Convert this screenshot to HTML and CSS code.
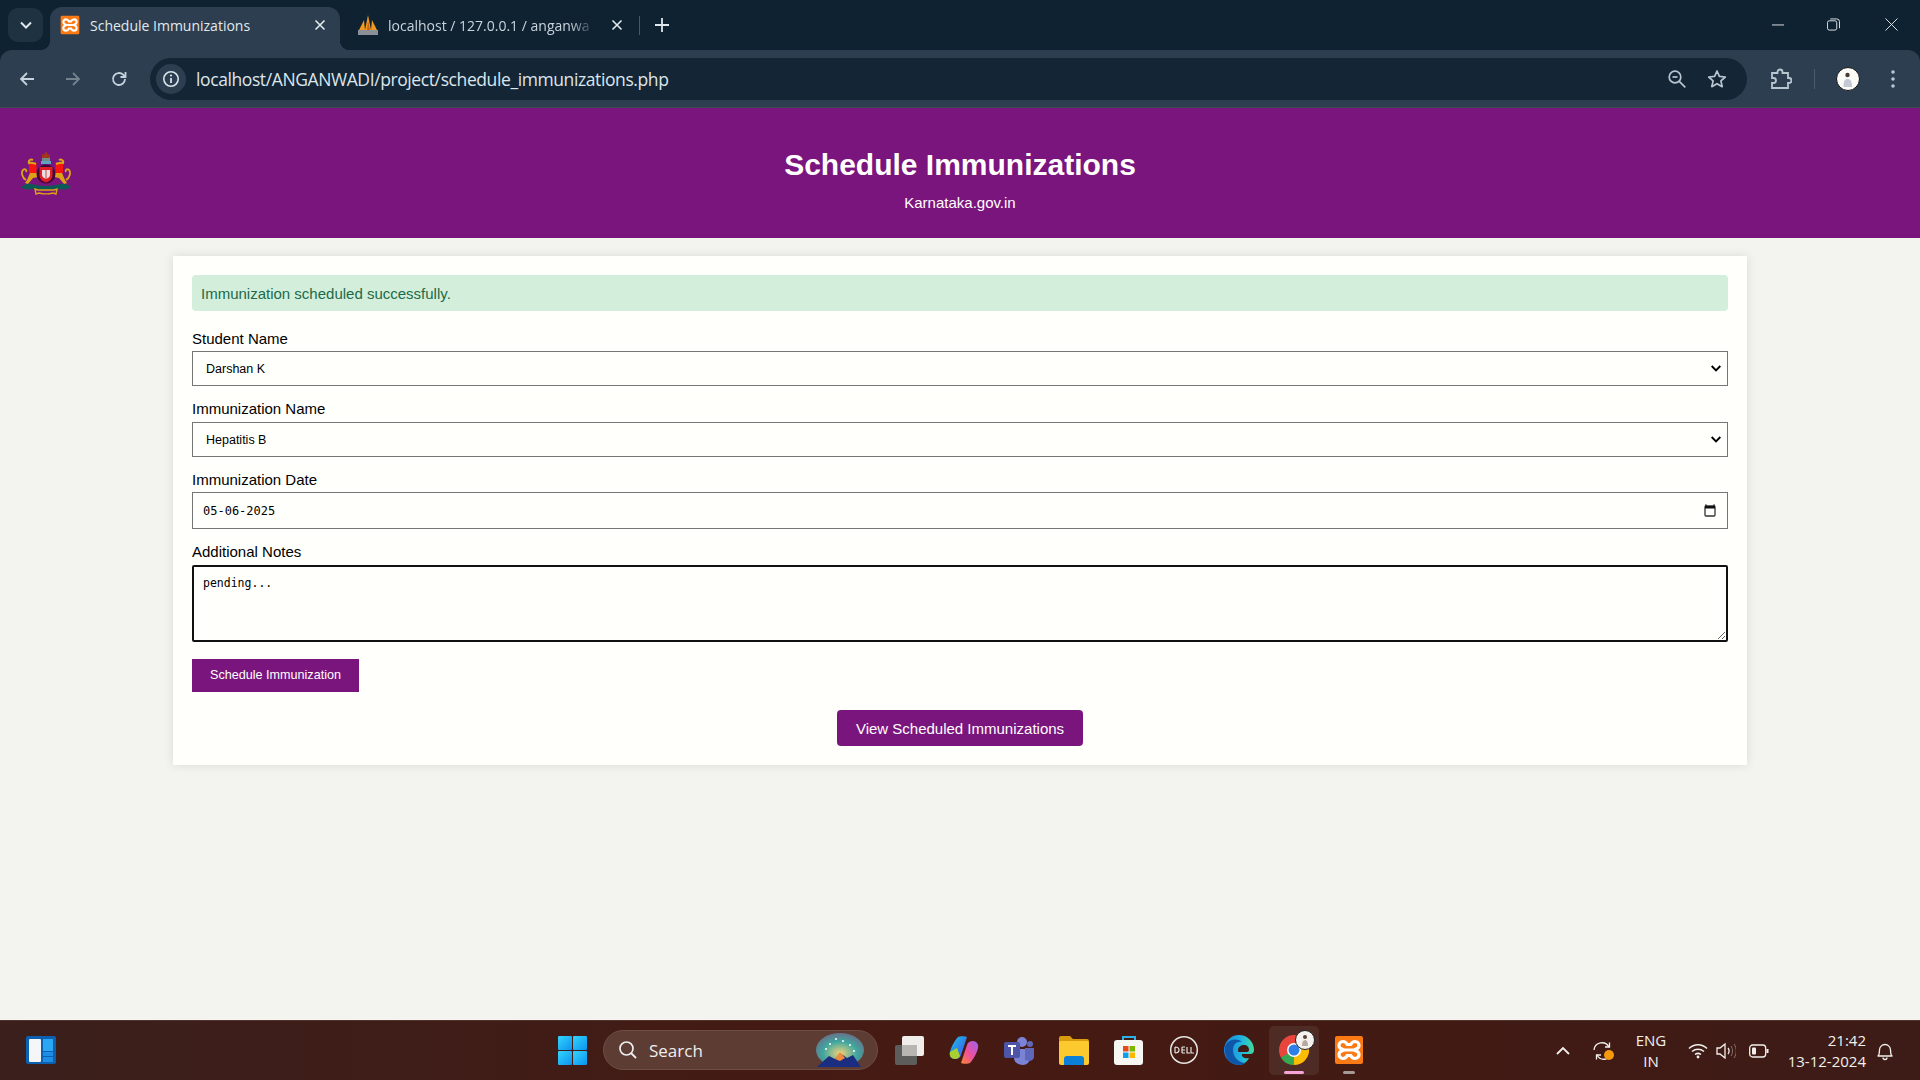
FILE: index.html
```html
<!DOCTYPE html>
<html lang="en">
<head>
<meta charset="utf-8">
<title>Schedule Immunizations</title>
<link rel="stylesheet" href="styles.css">
</head>
<body>
<svg class="defs" width="0" height="0" aria-hidden="true">
  <defs>
    <symbol id="xampp" viewBox="0 0 30 30">
      <rect x="1" y="1" width="28" height="28" rx="2" fill="#fb7a14"/>
      <path d="M9 6.500c-2.600 0-4 2-4 4 0 1.800 1.200 3 2.800 3.600L10 15l-2.200.9C6.200 16.500 5 17.700 5 19.500c0 2 1.400 4 4 4 2.200 0 3.500-1.500 4.300-3h3.400c.8 1.500 2.100 3 4.300 3 2.600 0 4-2 4-4 0-1.800-1.200-3-2.800-3.600L20 15l2.200-.9c1.600-.6 2.800-1.800 2.800-3.600 0-2-1.400-4-4-4-2.200 0-3.500 1.500-4.300 3h-3.400C12.500 8 11.200 6.500 9 6.500z" fill="none" stroke="#fff" stroke-width="3.200"/>
      <path d="M11 15h8" stroke="#fff" stroke-width="3"/>
    </symbol>
    <symbol id="chev" viewBox="0 0 14 10">
      <path d="M2 2.500l5 5 5-5" fill="none" stroke="currentColor" stroke-width="2"/>
    </symbol>
    <symbol id="x" viewBox="0 0 12 12">
      <path d="M1.500 1.500l9 9M10.500 1.500l-9 9" fill="none" stroke="currentColor" stroke-width="1.600"/>
    </symbol>
  </defs>
</svg>

<header class="browser">
  <div class="tabstrip">
    <button class="tabmenu"><svg class="i14"><use href="#chev"/></svg></button>
    <div class="tab tab-active">
      <svg class="favicon"><use href="#xampp"/></svg>
      <span class="tab-title">Schedule Immunizations</span>
      <svg class="tab-x"><use href="#x"/></svg>
    </div>
    <div class="tab tab-other">
      <svg class="favicon" viewBox="0 0 20 20">
        <path d="M1 15L6 5l1 10zM7 15L10 0l3 15zM13 15l1-10 5 10z" fill="#f29a1f"/>
        <path d="M9 15l1-9 2 9z" fill="#c9610f"/>
        <rect x="0" y="15" width="20" height="5" fill="#8b8f97"/>
      </svg>
      <span class="tab-title tab-fade">localhost / 127.0.0.1 / anganwa</span>
      <svg class="tab-x"><use href="#x"/></svg>
    </div>
    <span class="tab-div"></span>
    <svg class="plus" viewBox="0 0 14 14"><path d="M7 0v14M0 7h14" stroke="#dfe6ec" stroke-width="1.800"/></svg>
    <div class="winctl">
      <svg class="win win-min" viewBox="0 0 14 14"><path d="M0 7.500h13" stroke="#e8ecef" stroke-width="1"/></svg>
      <svg class="win" viewBox="0 0 14 14"><rect x=".5" y="3" width="10" height="10" rx="2" fill="none" stroke="#e8ecef"/><path d="M3.500 1h7a3 3 0 0 1 3 3v7" fill="none" stroke="#e8ecef"/></svg>
      <svg class="win" viewBox="0 0 14 14"><path d="M.5.500l13 13M13.500.500l-13 13" stroke="#e8ecef" stroke-width="1"/></svg>
    </div>
  </div>
  <div class="toolbar">
    <svg class="nav" viewBox="0 0 18 18"><path d="M16 9H3M9 3L3 9l6 6" fill="none" stroke="#c6d2dc" stroke-width="1.800"/></svg>
    <svg class="nav" viewBox="0 0 18 18"><path d="M2 9h13M9 3l6 6-6 6" fill="none" stroke="#75838f" stroke-width="1.800"/></svg>
    <svg class="nav" viewBox="0 0 18 18"><path d="M15 9a6 6 0 1 1-1.800-4.300L15 6.500" fill="none" stroke="#c6d2dc" stroke-width="1.800"/><path d="M15.500 2v5h-5" fill="none" stroke="#c6d2dc" stroke-width="1.800"/></svg>
    <div class="omnibox">
      <span class="info"><svg class="i18" viewBox="0 0 18 18"><circle cx="9" cy="9" r="7.200" fill="none" stroke="#dbe3ea" stroke-width="1.600"/><path d="M9 8v5" stroke="#dbe3ea" stroke-width="1.800"/><circle cx="9" cy="5.500" r="1.100" fill="#dbe3ea"/></svg></span>
      <span class="url">localhost/ANGANWADI/project/schedule_immunizations.php</span>
      <svg class="omni-i" viewBox="0 0 20 20"><circle cx="8" cy="8" r="5.800" fill="none" stroke="#b9c6d1" stroke-width="1.700"/><path d="M5.500 8h5" stroke="#b9c6d1" stroke-width="1.700"/><path d="M12.300 12.300l6 6" stroke="#b9c6d1" stroke-width="1.700"/></svg>
      <svg class="omni-i" viewBox="0 0 20 20"><path d="M10 2l2.400 5.400 5.900.6-4.400 3.900 1.300 5.800L10 14.700l-5.200 3 1.300-5.800L1.700 8l5.900-.6z" fill="none" stroke="#b9c6d1" stroke-width="1.700" stroke-linejoin="round"/></svg>
    </div>
    <svg class="ext" viewBox="0 0 22 22"><path d="M2 5h5.500V4a2.500 2.500 0 0 1 5 0v1H18v5h1a2.500 2.500 0 0 1 0 5h-1v5H2v-5h1.500a2.500 2.500 0 0 0 0-5H2z" fill="none" stroke="#b9c6d1" stroke-width="1.800"/></svg>
    <span class="tb-div"></span>
    <span class="avatar"><svg class="i24" viewBox="0 0 24 24"><circle cx="12" cy="12" r="11.500" fill="#fbfbf8" stroke="#111"/><circle cx="11.500" cy="8" r="2.200" fill="#4a3a35"/><path d="M7.500 20c0-6 1-8 4-8s4.500 2 4.500 8z" fill="#c3c8d2"/></svg></span>
    <svg class="dots" viewBox="0 0 4 20"><circle cx="2" cy="3" r="1.800" fill="#b9c6d1"/><circle cx="2" cy="10" r="1.800" fill="#b9c6d1"/><circle cx="2" cy="17" r="1.800" fill="#b9c6d1"/></svg>
  </div>
</header>

<div class="page">
  <section class="banner">
    <svg class="emblem" viewBox="0 0 50 46">
      <path d="M21 8V4l2 1 2-4 2 4 2-1v4z" fill="#a4361c"/>
      <rect x="21" y="8" width="8" height="3" fill="#6c8f8a"/>
      <rect x="20" y="11" width="10" height="3" fill="#5fa3c0"/>
      <rect x="8" y="13" width="7.500" height="10" fill="#f5160f"/>
      <rect x="34.500" y="13" width="7.500" height="10" fill="#f5160f"/>
      <path d="M15 14c-3-1-5-2-7-1-1-3 2-4 4-3M35 14c3-1 5-2 7-1 1-3-2-4-4-3" fill="none" stroke="#dfa414" stroke-width="2"/>
      <path d="M16 23L9 23 6 30l-2 3 3 1 5-6 5-1zM34 23l7 0 3 7 2 3-3 1-5-6-5-1z" fill="#dba315"/>
      <path d="M5 30C1 28 0 22 2 20c2-2 4 0 3 2M45 30c4-2 5-8 3-10-2-2-4 0-3 2" fill="none" stroke="#dba315" stroke-width="1.800"/>
      <circle cx="25" cy="24" r="9.500" fill="#3b0a3c"/>
      <path d="M18.500 17h13v8c0 4-3 6.500-6.500 7.500-3.500-1-6.500-3.500-6.500-7.500z" fill="#e21d26"/>
      <path d="M21 20h8v5c0 2-2 3-4 4-2-1-4-2-4-4z" fill="#e9dfe0"/>
      <path d="M25 20v9" stroke="#c9484e" stroke-width="1"/>
      <path d="M0 37c3-3 8-4 11-3 4 1 9 2 14 2s10-1 14-2c3-1 8 0 11 3-2 2-7 3-11 2-5 1-23 1-28 0-4 1-9 0-11-2z" fill="#0d5a54"/>
      <path d="M14 39l3 1h16l3-1-1 5-3-1c-4 1-10 1-14 0l-3 1z" fill="none" stroke="#d9a018" stroke-width="1.400"/>
    </svg>
    <div class="banner-text">
      <h1>Schedule Immunizations</h1>
      <p>Karnataka.gov.in</p>
    </div>
  </section>

  <main class="card">
    <div class="alert">Immunization scheduled successfully.</div>
    <form class="form">
      <div class="field">
        <label for="student">Student Name</label>
        <div class="selectbox">
          <select id="student" class="control"><option>Darshan K</option></select>
          <svg class="sel-chev" viewBox="0 0 10 7"><path d="M.7 1l4.300 4.300L9.300 1" fill="none" stroke="#000" stroke-width="1.900"/></svg>
        </div>
      </div>
      <div class="field">
        <label class="lb5" for="imm">Immunization Name</label>
        <div class="selectbox">
          <select id="imm" class="control"><option>Hepatitis B</option></select>
          <svg class="sel-chev" viewBox="0 0 10 7"><path d="M.7 1l4.300 4.300L9.300 1" fill="none" stroke="#000" stroke-width="1.900"/></svg>
        </div>
      </div>
      <div class="field">
        <label for="date">Immunization Date</label>
        <div class="datebox">
          <input id="date" class="dateinput" type="text" value="05-06-2025">
          <svg class="cal" viewBox="0 0 12 12"><path d="M2 0v2M10 0v2" stroke="#111" stroke-width="1.500"/><rect x="1" y="1.500" width="10" height="10" rx="1" fill="none" stroke="#333" stroke-width="1.300"/><rect x="1" y="1.500" width="10" height="2.500" fill="#111"/></svg>
        </div>
      </div>
      <div class="field">
        <label class="lb5" for="notes">Additional Notes</label>
        <textarea id="notes" class="notes">pending...</textarea>
      </div>
      <button type="button" class="submit">Schedule Immunization</button>
    </form>
    <div class="viewrow"><a class="viewbtn" href="#">View Scheduled Immunizations</a></div>
  </main>
</div>

<footer class="taskbar">
  <svg class="widget" viewBox="0 0 30 28"><rect width="30" height="28" rx="2" fill="#0d5fb0"/><rect x="3" y="3" width="12" height="23" rx="1" fill="#f4f6f8"/><rect x="17" y="3" width="10" height="12" fill="#2aa6f2"/><rect x="17" y="16" width="10" height="4" fill="#1c8ee6"/><rect x="17" y="21" width="10" height="5" fill="#1c8ee6"/></svg>
  <div class="tb-center">
    <svg class="winlogo" viewBox="0 0 29 29">
      <defs><linearGradient id="wg" x1="0" y1="0" x2="1" y2="1"><stop offset="0" stop-color="#35d4fb"/><stop offset="1" stop-color="#0a93f0"/></linearGradient></defs>
      <rect width="14" height="14" rx="1" fill="url(#wg)"/><rect x="15" width="14" height="14" rx="1" fill="url(#wg)"/><rect y="15" width="14" height="14" rx="1" fill="url(#wg)"/><rect x="15" y="15" width="14" height="14" rx="1" fill="url(#wg)"/>
    </svg>
    <div class="search">
      <svg class="i20" viewBox="0 0 20 20"><circle cx="8.500" cy="8.500" r="6.500" fill="none" stroke="#eee" stroke-width="1.700"/><path d="M13 13l5 5" stroke="#eee" stroke-width="1.800"/></svg>
      <span class="search-t">Search</span>
      <svg class="search-art" viewBox="0 0 58 34">
        <defs><radialGradient id="sg" cx=".5" cy=".6" r=".7"><stop offset="0" stop-color="#f2d27a"/><stop offset=".5" stop-color="#3fa8a0"/><stop offset="1" stop-color="#7a5a80"/></radialGradient></defs>
        <ellipse cx="30" cy="17" rx="24" ry="17" fill="url(#sg)"/>
        <g fill="#fff"><circle cx="20" cy="11" r="1"/><circle cx="26" cy="6" r="1"/><circle cx="33" cy="8" r="1"/><circle cx="40" cy="12" r="1"/><circle cx="16" cy="16" r="1"/><circle cx="44" cy="18" r="1"/></g>
        <path d="M7 34l12-11 6 3 5-6 7 5 6-3 8 12z" fill="#1a2d80"/>
        <path d="M25 26l5-7 5 6-5 3z" fill="#f08a3c"/>
      </svg>
    </div>
    <div class="apps">
      <span class="app"><svg class="i30" viewBox="0 0 30 30"><rect x="1" y="10" width="22" height="20" rx="2" fill="#5d5d5b"/><rect x="8" y="1" width="22" height="20" rx="2" fill="#efeeea"/><rect x="8" y="10" width="15" height="11" fill="#b8b6b2"/></svg></span>
      <span class="app"><svg class="i30" viewBox="0 0 30 30"><defs><linearGradient id="cp" x1="0" y1="0" x2="1" y2="1"><stop offset="0" stop-color="#1fc8d8"/><stop offset=".6" stop-color="#2f7bf0"/><stop offset="1" stop-color="#7a5cf0"/></linearGradient><linearGradient id="cq" x1="1" y1="0" x2="0" y2="1"><stop offset="0" stop-color="#9a62f0"/><stop offset=".55" stop-color="#f0509a"/><stop offset="1" stop-color="#f58a2c"/></linearGradient></defs><path d="M9 2c1-1 8-1 9 0l-6 18c-1 3-3 4-6 4-4 0-6-4-5-7 1-5 5-12 8-15z" fill="url(#cp)"/><path d="M21 28c-1 1-8 1-9 0l6-18c1-3 3-4 6-4 4 0 6 4 5 7-1 5-5 12-8 15z" fill="url(#cq)"/><path d="M8 13l-7 4c-1 4 1 7 5 7 2 0 4-1 5-3z" fill="#a8d030"/></svg></span>
      <span class="app"><svg class="i30" viewBox="0 0 30 30"><circle cx="18" cy="7" r="5" fill="#7b83d6"/><circle cx="26" cy="9" r="3" fill="#5f67b8"/><path d="M10 14h16v9a7 7 0 0 1-7 7c-5 0-9-3-9-7z" fill="#7b83d6"/><path d="M21 13h9v9c0 2-2 4-5 4l-4-1z" fill="#5f67b8"/><rect y="7" width="16" height="16" rx="2" fill="#4e55a8"/><path d="M4 11h8M8 11v9" stroke="#fff" stroke-width="2"/></svg></span>
      <span class="app"><svg class="i30" viewBox="0 0 30 30"><path d="M0 3a2 2 0 0 1 2-2h9l3 3h14a2 2 0 0 1 2 2v3H0z" fill="#d99c0f"/><rect y="6" width="30" height="24" rx="2" fill="#fcc92e"/><path d="M5 30v-6a3 3 0 0 1 3-3h14a3 3 0 0 1 3 3v6z" fill="#0c7fd8"/></svg></span>
      <span class="app"><svg class="i30" viewBox="0 0 30 30"><path d="M9 8V2h12v6" fill="none" stroke="#2ab2ec" stroke-width="2"/><rect y="5" width="29" height="25" rx="3" fill="#f6f6f3"/><rect x="9" y="11" width="5.500" height="5.500" fill="#e8481c"/><rect x="15.500" y="11" width="5.500" height="5.500" fill="#7db800"/><rect x="9" y="17.500" width="5.500" height="5.500" fill="#0aa0ec"/><rect x="15.500" y="17.500" width="5.500" height="5.500" fill="#fdb800"/></svg></span>
      <span class="app"><svg class="i30" viewBox="0 0 30 30"><circle cx="15" cy="15" r="13.300" fill="none" stroke="#e6e6e3" stroke-width="1.500"/><path d="M6 12v6M6 12c3 0 4 1 4 3s-1 3-4 3M13 12h3M13 15h3M13 18h3M13 12v6M18 12v6h3M22 12v6h3" fill="none" stroke="#e6e6e3" stroke-width="1.200"/></svg></span>
      <span class="app"><svg class="i30" viewBox="0 0 30 30"><defs><linearGradient id="eg" x1="0" y1="0" x2="1" y2="0"><stop offset="0" stop-color="#1a86dc"/><stop offset=".6" stop-color="#20b4e0"/><stop offset="1" stop-color="#42dc9c"/></linearGradient></defs><path d="M15 0a15 15 0 0 1 15 15c0 2-1 4-4 4h-8c-1 3 3 5 7 4-2 4-6 7-10 7A15 15 0 0 1 15 0z" fill="url(#eg)"/><path d="M1 12C3 5 12 2 18 7c-5-1-9 2-9 8 0 6 4 12 12 13-2 1-4 2-6 2-9 0-15-7-14-18z" fill="#0f56a8"/><path d="M14 15c0-3 3-5 6-5 3 0 5 2 5 5 0 1-1 2-2 2h-8c-1 0-1-1-1-2z" fill="#3f1a14"/></svg></span>
      <span class="app app-on">
        <svg class="i30" viewBox="0 0 30 30"><circle cx="15" cy="15" r="15" fill="#e8453c"/><path d="M15 15L2 22.500A15 15 0 0 0 15 30z" fill="#34a853"/><path d="M15 15v15A15 15 0 0 0 28 7.500z" fill="#fbbc04"/><circle cx="15" cy="15" r="7" fill="#fff"/><circle cx="15" cy="15" r="5.500" fill="#2f7fe8"/></svg>
        <svg class="badge" viewBox="0 0 20 20"><circle cx="10" cy="10" r="9.500" fill="#f4f2ee" stroke="#222"/><circle cx="10" cy="7" r="2" fill="#5a4038"/><path d="M7 16c0-4 1-6 3-6s3 2 3 6z" fill="#b8a8a0"/></svg>
        <span class="ind ind-on"></span>
      </span>
      <span class="app"><svg class="i30" viewBox="0 0 30 30"><use href="#xampp"/></svg><span class="ind"></span></span>
    </div>
  </div>
  <div class="tray">
    <svg class="tray-chev" viewBox="0 0 14 10"><path d="M1 8l6-6 6 6" fill="none" stroke="#f2f0ec" stroke-width="1.800"/></svg>
    <span class="sync">
      <svg class="i20" viewBox="0 0 20 20"><path d="M1 9a8 8 0 0 1 15-3M19 11a8 8 0 0 1-15 3" fill="none" stroke="#f2f0ec" stroke-width="1.300"/><path d="M12 6h4.500V1.500M8 14H3.500v4.500" fill="none" stroke="#f2f0ec" stroke-width="1.300"/></svg>
      <span class="dot"></span>
    </span>
    <span class="lang">ENG<br>IN</span>
    <svg class="wifi" viewBox="0 0 20 16"><path d="M1 5.500c5-5 13-5 18 0M4 8.500c3.500-3 8.500-3 12 0M7 11.500c2-1.500 4-1.500 6 0" fill="none" stroke="#f2f0ec" stroke-width="1.500"/><circle cx="10" cy="14" r="1.400" fill="#f2f0ec"/></svg>
    <svg class="vol" viewBox="0 0 20 16"><path d="M1 5h3l5-4v14l-5-4H1z" fill="none" stroke="#f2f0ec" stroke-width="1.300"/><path d="M12 5c1.500 2 1.500 4 0 6" fill="none" stroke="#f2f0ec" stroke-width="1.300"/><path d="M15 3c2 3 2 7 0 10M18 1c3 4 3 10 0 14" fill="none" stroke="#8b7570" stroke-width="1"/></svg>
    <svg class="batt" viewBox="0 0 20 14"><rect x=".7" y="1" width="16" height="12" rx="3" fill="none" stroke="#f2f0ec" stroke-width="1.300"/><rect x="3" y="3.500" width="4" height="7" rx="1" fill="#f2f0ec"/><path d="M18.500 5v4" stroke="#f2f0ec" stroke-width="2"/></svg>
    <span class="clock">21:42<br>13-12-2024</span>
    <svg class="bell" viewBox="0 0 18 20"><path d="M2 15c1.500-1.500 1.500-3 1.500-6a5.500 5.500 0 0 1 11 0c0 3 0 4.500 1.500 6z" fill="none" stroke="#f2f0ec" stroke-width="1.300" stroke-linejoin="round"/><path d="M7 16.500a2 2 0 0 0 4 0" fill="none" stroke="#f2f0ec" stroke-width="1.300"/></svg>
  </div>
</footer>
</body>
</html>
```

FILE: styles.css
```css
* { box-sizing: border-box; }
html, body { margin: 0; height: 100%; }
body {
  display: flex;
  flex-direction: column;
  height: 100vh;
  overflow: hidden;
  background: #f3f4f0;
  font-family: "Liberation Sans", Arial, sans-serif;
}
.defs { position: absolute; }
.i14 { width: 14px; height: 10px; display: block; }
.i18 { width: 18px; height: 18px; display: block; }
.i20 { width: 20px; height: 20px; display: block; flex: none; }
.i24 { width: 24px; height: 24px; display: block; }
.i30 { width: 30px; height: 30px; display: block; }

/* browser chrome */
.browser { flex: none; height: 108px; background: #0f2232; color: #dfe6ec; }
.tabstrip { height: 50px; display: flex; align-items: flex-start; padding-left: 8px; }
.tabmenu {
  width: 35px; height: 34px; margin: 8px 7px 0 0; padding: 0;
  border: 0; border-radius: 10px; background: #1f3242; color: #dfe6ec;
  display: flex; align-items: center; justify-content: center;
}
.tab {
  width: 290px; height: 43px; margin-top: 7px;
  display: flex; align-items: center; padding: 0 14px 7px 10px;
  font: 14px "Open Sans", "Noto Sans", sans-serif;
  position: relative;
}
.tab-active { background: #2c3e50; border-radius: 12px 12px 0 0; }
.tab-active::before, .tab-active::after {
  content: ""; position: absolute; bottom: 0; width: 10px; height: 10px;
}
.tab-active::before { left: -10px; background: radial-gradient(circle at 0 0, transparent 10px, #2c3e50 10.500px); }
.tab-active::after { right: -10px; background: radial-gradient(circle at 100% 0, transparent 10px, #2c3e50 10.500px); }
.favicon { width: 20px; height: 20px; flex: none; margin-right: 10px; }
.tab-title { flex: 1; white-space: nowrap; color: #e2e8ec; }
.tab-other { width: 300px; padding: 0 17px 7px 18px; color: #c9d3da; }
.tab-other .tab-title { color: #c9d3da; }
.tab-fade { -webkit-mask-image: linear-gradient(to right, #000 88%, transparent 100%); mask-image: linear-gradient(to right, #000 88%, transparent 100%); }
.tab-x { width: 12px; height: 12px; flex: none; margin-left: 16px; color: #e2e8ec; }
.tab-div { width: 1px; height: 19px; margin: 16px 0 0 -1px; background: #46586a; }
.plus { width: 14px; height: 14px; margin: 18px 0 0 15px; }
.winctl { margin-left: auto; display: flex; padding: 18px 22px 0 0; gap: 45px; }
.win { width: 13px; height: 13px; display: block; }
.win-min { margin-right: -3px; }
.toolbar {
  height: 58px; background: #2c3e50; border-radius: 12px 12px 0 0;
  display: flex; align-items: center; padding: 0 0 0 18px;
  border-bottom: 1px solid #3d4c50;
}
.nav { width: 18px; height: 18px; flex: none; margin-right: 28px; }
.omnibox {
  width: 1597px; height: 42px; margin-left: -6px; flex: none;
  border-radius: 21px; background: #142535;
  display: flex; align-items: center; padding: 0 20px 0 6px;
}
.info { width: 30px; height: 30px; border-radius: 50%; background: #2c3e50; display: flex; align-items: center; justify-content: center; flex: none; }
.url { margin-left: 10px; font: 17.500px "Open Sans", "Noto Sans", sans-serif; letter-spacing: -.4px; color: #dde6ec; flex: 1; white-space: nowrap; }
.omni-i { width: 20px; height: 20px; flex: none; margin-left: 20px; }
.ext { width: 22px; height: 22px; flex: none; margin-left: 23px; }
.tb-div { width: 1px; height: 20px; background: #4a5b6b; margin-left: 22px; flex: none; }
.avatar { margin-left: 21px; flex: none; }
.dots { width: 4px; height: 20px; margin-left: 31px; flex: none; }

/* page */
.page { flex: 1; min-height: 0; }
.banner {
  height: 130px; background: #7b157e; color: #fff;
  display: flex; align-items: center; justify-content: center; position: relative;
}
.emblem { position: absolute; left: 21px; top: 42px; width: 50px; height: 46px; }
.banner-text { text-align: center; padding-top: 12px; }
.banner h1 { margin: 0; font-size: 30px; line-height: 35px; font-weight: 700; }
.banner p { margin: 12px 0 0; font-size: 15px; line-height: 18px; }
.card {
  width: 1574px; margin: 18px auto 0; padding: 19px;
  background: #fffffc; box-shadow: 0 0 10px rgba(0,0,0,.1);
}
.alert {
  height: 36px; padding: 1px 9px 0; line-height: 36px; font-size: 15px;
  background: #d3efdb; color: #1c6a4a; border-radius: 4px; margin-bottom: 18px;
}
.form { display: block; }
.field { margin-bottom: 13px; }
.field label { display: block; font-size: 15px; line-height: 18px; padding-top: 1px; height: 18px; margin-bottom: 4px; color: #000; }
.field label.lb5 { margin-bottom: 5px; }
.selectbox { position: relative; }
.control {
  display: block; width: 100%; height: 35px; padding: 0 13px;
  border: 1px solid #767676; border-radius: 0; background: #fffffc;
  -webkit-appearance: none; appearance: none;
  font: 12.500px "Liberation Sans", Arial, sans-serif; color: #000;
}
.sel-chev { position: absolute; right: 7px; top: 14px; width: 10px; height: 7px; pointer-events: none; }
.datebox {
  height: 37px; border: 1px solid #767676; background: #fffffc;
  display: flex; align-items: center; padding: 0 9px 0 10px;
}
.dateinput {
  flex: 1; min-width: 0; border: 0; padding: 0; outline: 0; background: transparent;
  font: 12px "DejaVu Sans Mono", monospace; color: #000;
}
.cal { width: 12px; height: 13px; flex: none; margin-right: 2px; }
.field .notes {
  display: block; width: 100%; height: 77px; padding: 9px 9px;
  border: 2px solid #111; border-radius: 2px; background: #fffffc; outline: 0;
  font: 11.500px/15px "DejaVu Sans Mono", monospace; color: #000; resize: vertical;
}
.field:has(.notes) { margin-bottom: 17px; }
.submit {
  display: block; width: 167px; height: 33px; padding: 0 0 2px; border: 0;
  background: #7b157e; color: #fff; font: 12.600px "Liberation Sans", Arial, sans-serif;
}
.viewrow { display: flex; justify-content: center; margin-top: 18px; }
.viewbtn {
  width: 246px; height: 36px; padding-top: 1px; line-height: 36px; text-align: center;
  background: #7b157e; color: #fff; border-radius: 4px; font-size: 15px; text-decoration: none;
}

/* taskbar */
.taskbar {
  flex: none; height: 60px; background: #3f1a14; border-top: 1px solid #54332c;
  display: flex; align-items: center; position: relative; padding: 0 0 1px 26px;
  background-image: linear-gradient(to right, #3a1f1c, #461a12 50%, #3d1b17);
}
.widget { width: 30px; height: 28px; flex: none; }
.tb-center { display: flex; align-items: center; margin-left: 502px; }
.winlogo { width: 29px; height: 29px; flex: none; }
.search {
  width: 275px; height: 40px; margin-left: 16px; border-radius: 20px;
  background: #5d3c33; border: 1px solid #6d4d44;
  display: flex; align-items: center; padding: 0 7px 0 14px; color: #eee;
  font: 17px "Open Sans", "Noto Sans", sans-serif;
}
.search-t { margin-left: 11px; flex: 1; }
.search-art { width: 58px; height: 34px; flex: none; margin-right: 2px; }
.apps { display: flex; align-items: center; margin-left: 6px; gap: 5px; }
.app {
  width: 50px; height: 49px; display: flex; align-items: center; justify-content: center;
  position: relative; border-radius: 5px;
}
.app-on { background: #4f2b26; }
.badge { position: absolute; left: 26px; top: 4px; width: 20px; height: 20px; }
.ind { position: absolute; bottom: 1px; left: 19px; width: 12px; height: 3px; border-radius: 2px; background: #a59a96; }
.ind-on { left: 15px; width: 20px; background: #f7a3d8; }
.tray { position: absolute; right: 0; top: 0; height: 59px; display: flex; align-items: center; color: #f2f0ec; }
.tray-chev { width: 14px; height: 10px; flex: none; }
.sync { position: relative; margin-left: 23px; }
.dot { position: absolute; left: 11px; top: 9px; width: 10px; height: 10px; border-radius: 50%; background: #f59a0c; }
.lang { width: 40px; margin-left: 18px; text-align: center; font: 15px/21px "Open Sans", "Noto Sans", sans-serif; }
.wifi { width: 20px; height: 16px; margin-left: 17px; flex: none; }
.vol { width: 20px; height: 16px; margin-left: 8px; flex: none; }
.batt { width: 20px; height: 14px; margin-left: 13px; flex: none; }
.clock { width: 79px; margin-left: 18px; text-align: right; white-space: nowrap; font: 15px/21px "Open Sans", "Noto Sans", sans-serif; }
.bell { width: 18px; height: 20px; margin: 0 26px 0 10px; flex: none; }
```
